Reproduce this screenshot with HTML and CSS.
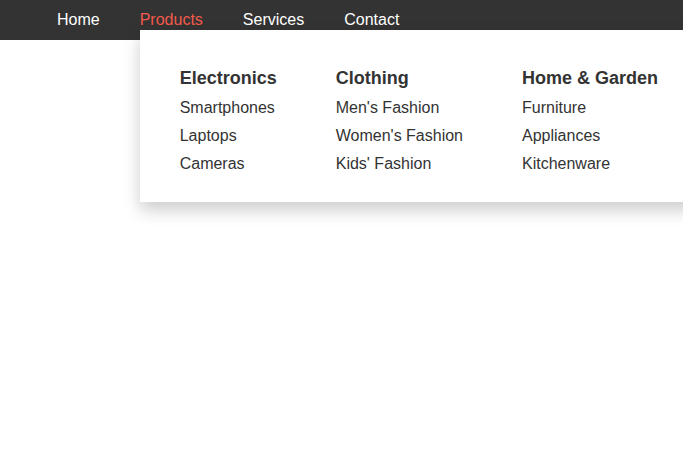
FILE: index.html
```html
<!DOCTYPE html>
<html lang="en">
<head>
    <meta charset="UTF-8">
    <meta name="viewport" content="width=device-width, initial-scale=1.0">
    <title>Mega Menu</title>
    <link rel="stylesheet" href="styles.css">
</head>
<body>
    <div class="page">
        <!-- Barre de navigation -->
        <nav class="navbar">
            <ul class="nav-menu">
                <li><a href="#">Home</a></li>
                <li class="has-dropdown">
                    <a href="#" class="active">Products</a>
                    <!-- Mega menu ouvert -->
                    <div class="mega-menu">
                        <div class="menu-column">
                            <h3>Electronics</h3>
                            <ul>
                                <li><a href="#">Smartphones</a></li>
                                <li><a href="#">Laptops</a></li>
                                <li><a href="#">Cameras</a></li>
                            </ul>
                        </div>
                        <div class="menu-column">
                            <h3>Clothing</h3>
                            <ul>
                                <li><a href="#">Men's Fashion</a></li>
                                <li><a href="#">Women's Fashion</a></li>
                                <li><a href="#">Kids' Fashion</a></li>
                            </ul>
                        </div>
                        <div class="menu-column">
                            <h3>Home &amp; Garden</h3>
                            <ul>
                                <li><a href="#">Furniture</a></li>
                                <li><a href="#">Appliances</a></li>
                                <li><a href="#">Kitchenware</a></li>
                            </ul>
                        </div>
                    </div>
                </li>
                <li><a href="#">Services</a></li>
                <li><a href="#">Contact</a></li>
            </ul>
        </nav>
    </div>
</body>
</html>
```

FILE: styles.css
```css
/* CSS */
body {
    font-family: "Liberation Sans", Arial, sans-serif;
    background-color: #fff;
    margin: 0;
    padding: 0;
}

/* le menu déborde à droite : on coupe ici */
.page {
    height: 100vh;
    overflow: hidden;
}

.navbar {
    background-color: #333;
    height: 40px;
    position: relative;
}

.nav-menu {
    list-style: none;
    margin: 0;
    padding: 0 0 0 37px;
    display: flex;
}

.nav-menu > li {
    position: relative;
}

.nav-menu > li > a {
    display: block;
    padding: 0 20px;
    line-height: 40px;
    font-size: 16px;
    color: #fff;
    text-decoration: none;
}

.nav-menu > li > a.active {
    color: #f25a4c;
}

.mega-menu {
    position: absolute;
    top: 30px;
    left: 20px;
    z-index: 10;
    display: flex;
    gap: 59px;
    padding: 37px 40px 24px;
    background-color: #fff;
    box-shadow: 0 8px 16px rgba(0, 0, 0, 0.2);
    white-space: nowrap;
}

.menu-column h3 {
    margin: 0 0 5px;
    font-size: 18px;
    line-height: 22px;
    color: #333;
}

.menu-column ul {
    list-style: none;
    margin: 0;
    padding: 0;
}

.menu-column ul li a {
    display: block;
    line-height: 28px;
    font-size: 16px;
    color: #333;
    text-decoration: none;
}
```
